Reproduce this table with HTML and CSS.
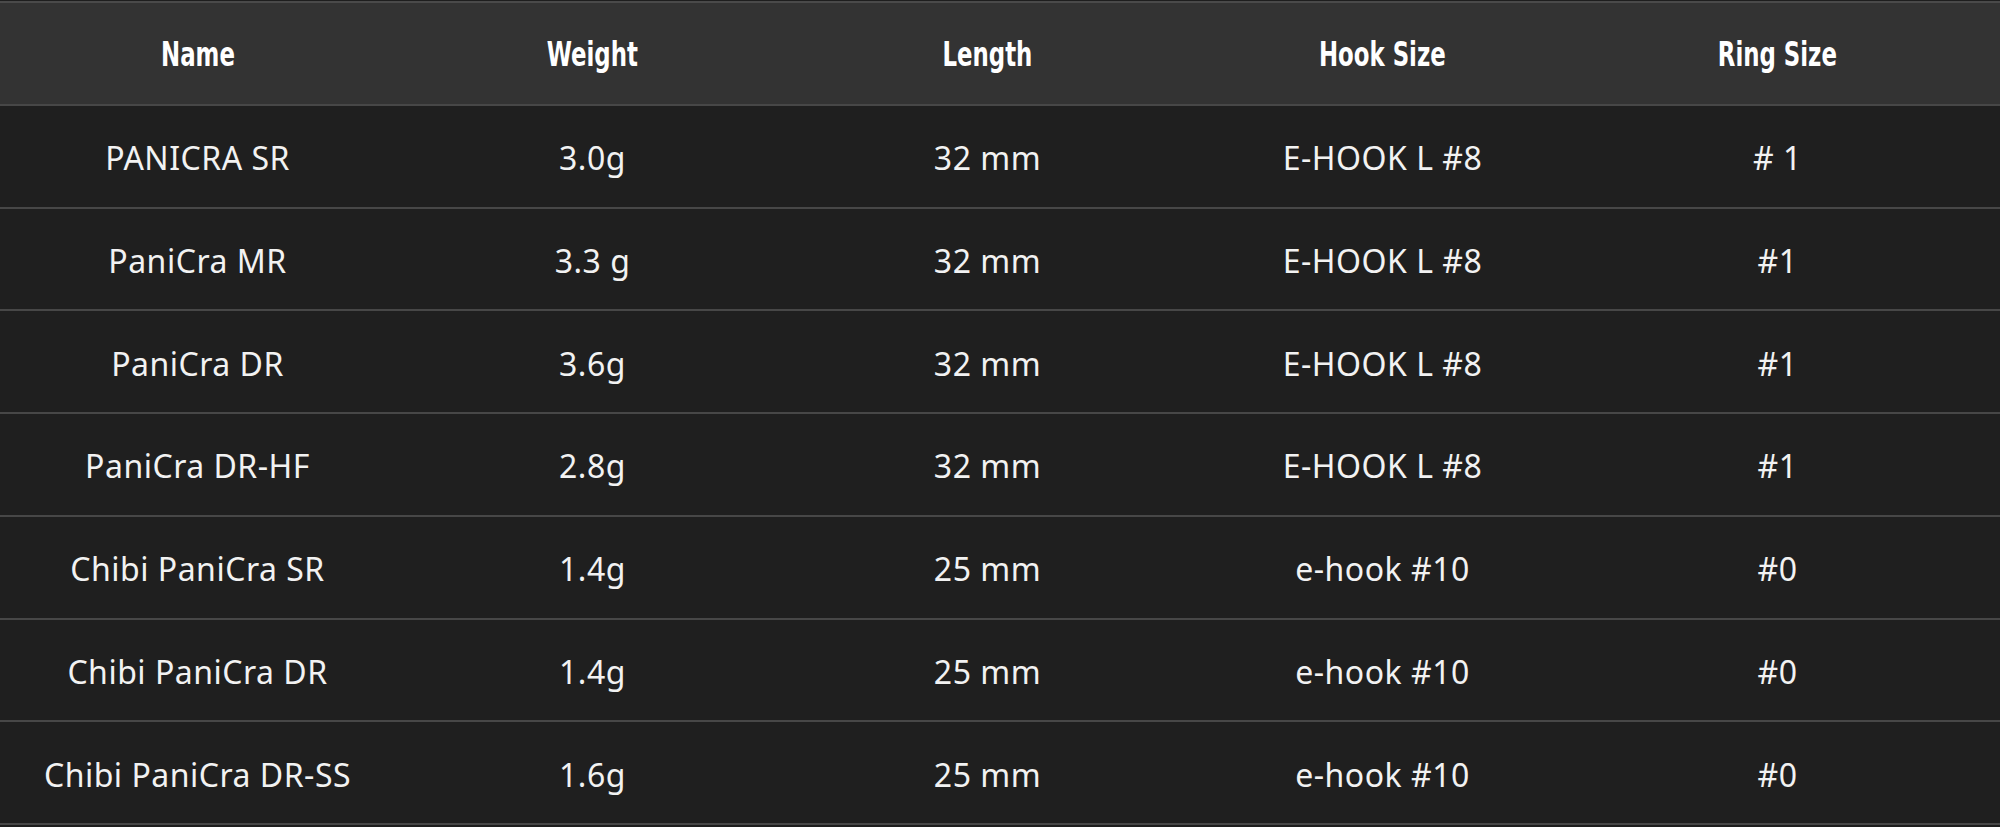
FILE: index.html
```html
<!DOCTYPE html>
<html lang="en">
<head>
<meta charset="utf-8">
<title>PaniCra Specs</title>
<link rel="stylesheet" href="styles.css">
</head>
<body>
<div class="spec-table">
  <div class="row head">
    <div class="cell"><span class="label">Name</span></div>
    <div class="cell"><span class="label">Weight</span></div>
    <div class="cell"><span class="label">Length</span></div>
    <div class="cell"><span class="label">Hook Size</span></div>
    <div class="cell"><span class="label">Ring Size</span></div>
  </div>
  <div class="row">
    <div class="cell">PANICRA SR</div>
    <div class="cell">3.0g</div>
    <div class="cell">32 mm</div>
    <div class="cell">E-HOOK L #8</div>
    <div class="cell"># 1</div>
  </div>
  <div class="row">
    <div class="cell">PaniCra MR</div>
    <div class="cell">3.3 g</div>
    <div class="cell">32 mm</div>
    <div class="cell">E-HOOK L #8</div>
    <div class="cell">#1</div>
  </div>
  <div class="row">
    <div class="cell">PaniCra DR</div>
    <div class="cell">3.6g</div>
    <div class="cell">32 mm</div>
    <div class="cell">E-HOOK L #8</div>
    <div class="cell">#1</div>
  </div>
  <div class="row">
    <div class="cell">PaniCra DR-HF</div>
    <div class="cell">2.8g</div>
    <div class="cell">32 mm</div>
    <div class="cell">E-HOOK L #8</div>
    <div class="cell">#1</div>
  </div>
  <div class="row">
    <div class="cell">Chibi PaniCra SR</div>
    <div class="cell">1.4g</div>
    <div class="cell">25 mm</div>
    <div class="cell">e-hook #10</div>
    <div class="cell">#0</div>
  </div>
  <div class="row">
    <div class="cell">Chibi PaniCra DR</div>
    <div class="cell">1.4g</div>
    <div class="cell">25 mm</div>
    <div class="cell">e-hook #10</div>
    <div class="cell">#0</div>
  </div>
  <div class="row">
    <div class="cell">Chibi PaniCra DR-SS</div>
    <div class="cell">1.6g</div>
    <div class="cell">25 mm</div>
    <div class="cell">e-hook #10</div>
    <div class="cell">#0</div>
  </div>
</div>
</body>
</html>
```

FILE: styles.css
```css
html, body {
  margin: 0;
  padding: 0;
  background: #1e1e1e;
}

body {
  padding-top: 1px;
  width: 2000px;
  height: 827px;
  overflow: hidden;
  font-family: "Noto Sans", "Open Sans", "DejaVu Sans", sans-serif;
  color: #f2f2f2;
}

.spec-table {
  border-top: 2px solid #4a4a4a;
  display: flex;
  flex-direction: column;
}

.row {
  display: grid;
  grid-template-columns: repeat(5, 395px) 1fr;
  height: 100.75px;
  border-bottom: 2px solid #474747;
  background: #1f1f1f;
  align-items: center;
}

.row.head {
  background: #333333;
}

.cell {
  text-align: center;
  font-size: 32px;
  letter-spacing: 0.5px;
  line-height: 1;
  padding-top: 4px;
}

.row.head .cell {
  font-family: "Liberation Sans Narrow", "DejaVu Sans", sans-serif;
  font-stretch: condensed;
  font-weight: 700;
  font-size: 33px;
  letter-spacing: 0;
  padding-top: 3px;
  color: #ffffff;
}

.label {
  display: inline-block;
  transform: scaleX(0.77);
}
```
